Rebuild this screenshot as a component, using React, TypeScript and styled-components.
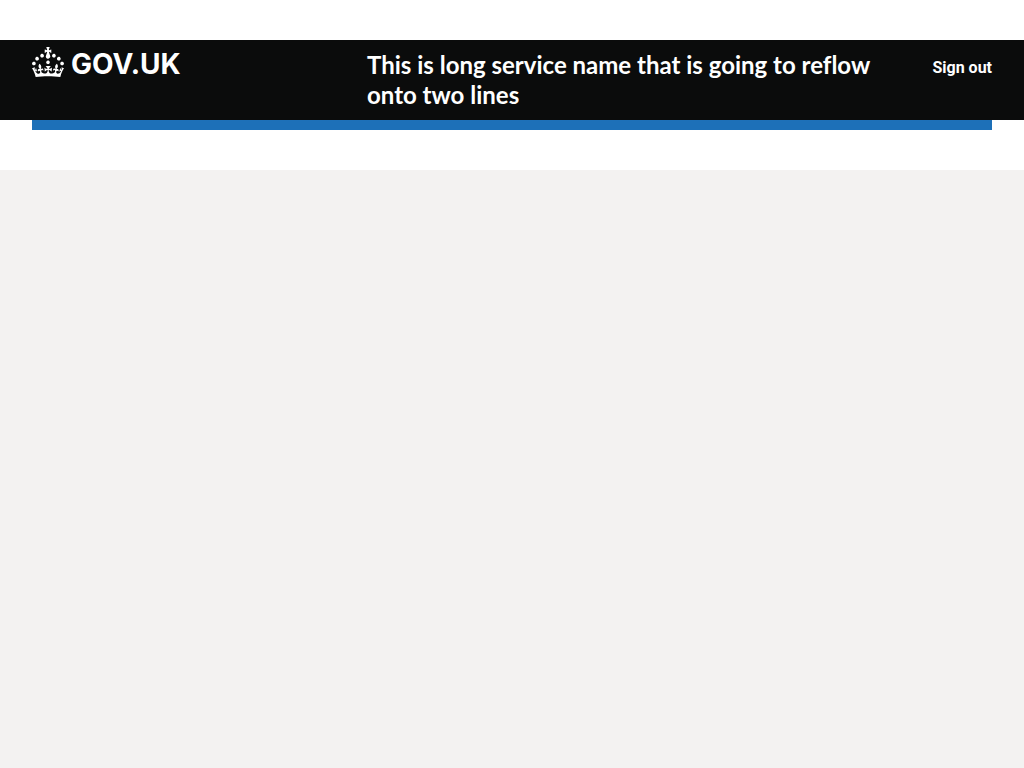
import React from "react";
import styled, { createGlobalStyle } from "styled-components";

const GlobalStyle = createGlobalStyle`
  html {
    background: #f3f2f1;
  }

  body {
    margin: 0;
    background: #f3f2f1;
    color: #0b0c0c;
    font-family: Lato, "Liberation Sans", Arial, sans-serif;
    font-variant-ligatures: none;
    -webkit-font-smoothing: antialiased;
  }
`;

const Page = styled.div`
  padding: 40px 0;
  background: #ffffff;
`;

const Header = styled.header`
  background: #0b0c0c;
  color: #ffffff;
`;

const Container = styled.div`
  max-width: 960px;
  margin: 0 32px;

  @media (min-width: 1024px) {
    margin: 0 auto;
  }
`;

const HeaderRow = styled(Container)`
  display: grid;
  grid-template-columns: 1fr 2fr;
  align-items: start;
  padding: 7px 0 10px;
`;

const HomeLink = styled.a`
  display: inline-flex;
  justify-self: start;
  gap: 7px;
  color: inherit;
  text-decoration: none;
`;

const Crown = styled.svg`
  display: block;
  width: 32px;
  height: 30px;
  fill: currentColor;
`;

const Wordmark = styled.span`
  font-family: Inter, "Liberation Sans", Arial, sans-serif;
  font-size: 28px;
  font-weight: 700;
  line-height: 34px;
`;

const ServiceArea = styled.div`
  display: flex;
  justify-content: space-between;
  gap: 40px;
  padding: 3px 0 0 15px;
`;

const ServiceLink = styled.a`
  max-width: 520px;
  color: inherit;
  font-size: 24px;
  font-weight: 700;
  line-height: 30px;
  text-decoration: none;
`;

const AccountNav = styled.nav`
  flex: none;
  padding-top: 5px;
`;

const NavLink = styled.a`
  display: block;
  color: inherit;
  font-family: Roboto, "Liberation Sans", Arial, sans-serif;
  font-size: 16px;
  font-weight: 700;
  line-height: 25px;
  text-decoration: none;
`;

const AccentBar = styled(Container)`
  height: 10px;
  background: #1d70b8;
`;

export default function App() {
  return (
    <>
      <GlobalStyle />
      <Page>
        <Header>
          <HeaderRow>
            <HomeLink href="#">
              <Crown viewBox="0 0 32 30" aria-hidden="true">
                <path d="M22.6 10.4c-1 .4-2-.1-2.4-1-.4-.9.1-2 1-2.4.9-.4 2 .1 2.4 1s-.1 2-1 2.4m-5.9 6.7c-.9.4-2-.1-2.4-1-.4-.9.1-2 1-2.4.9-.4 2 .1 2.4 1s-.1 2-1 2.4m10.8-3.7c-1 .4-2-.1-2.4-1-.4-.9.1-2 1-2.4.9-.4 2 .1 2.4 1s0 2-1 2.4m3.3 4.8c-1 .4-2-.1-2.4-1-.4-.9.1-2 1-2.4.9-.4 2 .1 2.4 1s-.1 2-1 2.4M17 4.7l2.3 1.2V2.5l-2.3.7-.2-.2.9-3h-3.4l.9 3-.2.2c-.1.1-2.3-.7-2.3-.7v3.4L15 4.7c.1.1.1.2.2.2l-1.3 4c-.1.2-.1.4-.1.6 0 1.1.8 2 1.9 2.2h.7c1-.2 1.9-1.1 1.9-2.1 0-.2 0-.4-.1-.6l-1.3-4c-.1-.2 0-.2.1-.3m-7.6 5.7c.9.4 2-.1 2.4-1 .4-.9-.1-2-1-2.4-.9-.4-2 .1-2.4 1s0 2 1 2.4m-5 3c.9.4 2-.1 2.4-1 .4-.9-.1-2-1-2.4-.9-.4-2 .1-2.4 1s.1 2 1 2.4m-3.2 4.8c.9.4 2-.1 2.4-1 .4-.9-.1-2-1-2.4-.9-.4-2 .1-2.4 1s0 2 1 2.4m14.8 11c4.4 0 8.6.3 12.3.8 1.1-4.5 2.4-7 3.7-8.8l-2.5-.9c.2 1.3.3 1.9 0 2.7-.4-.4-.8-1.1-1.1-2.3l-1.2 4c.7-.5 1.3-.8 2-.9-1.1 2.5-2.6 3.1-3.5 3-1.1-.2-1.7-1.2-1.5-2.1.3-1.2 1.5-1.5 2.1-.1 1.1-2.3-.8-3-2-2.3 1.9-1.9 2.1-3.5.6-5.6-2.1 1.6-2.1 3.2-1.2 5.5-1.2-1.4-3.2-.6-2.5 1.6.9-1.4 2.1-.5 1.9.8-.2 1.1-1.7 2.1-3.5 1.9-2.7-.2-2.9-2.1-2.9-3.6.7-.1 1.9.5 2.9 1.9l.4-4.3c-1.1 1.1-2.1 1.4-3.2 1.4.4-1.2 2.1-3 2.1-3h-5.4s1.7 1.9 2.1 3c-1.1 0-2.1-.2-3.2-1.4l.4 4.3c1-1.4 2.2-2 2.9-1.9-.1 1.5-.2 3.4-2.9 3.6-1.9.2-3.4-.8-3.5-1.9-.2-1.3 1-2.2 1.9-.8.7-2.3-1.2-3-2.5-1.6.9-2.2.9-3.9-1.2-5.5-1.5 2-1.3 3.7.6 5.6-1.2-.7-3.1 0-2 2.3.6-1.4 1.8-1.1 2.1.1.2.9-.3 1.9-1.5 2.1-.9.2-2.4-.5-3.5-3 .6 0 1.2.3 2 .9l-1.2-4c-.3 1.1-.7 1.9-1.1 2.3-.3-.8-.2-1.4 0-2.7l-2.9.9C1.3 23 2.6 25.5 3.7 30c3.7-.5 7.9-.8 12.3-.8" />
              </Crown>
              <Wordmark>GOV.UK</Wordmark>
            </HomeLink>
            <ServiceArea>
              <ServiceLink href="#">
                This is long service name that is going to reflow onto two lines
              </ServiceLink>
              <AccountNav aria-label="Account">
                <NavLink href="#">Sign out</NavLink>
              </AccountNav>
            </ServiceArea>
          </HeaderRow>
        </Header>
        <AccentBar />
      </Page>
    </>
  );
}
